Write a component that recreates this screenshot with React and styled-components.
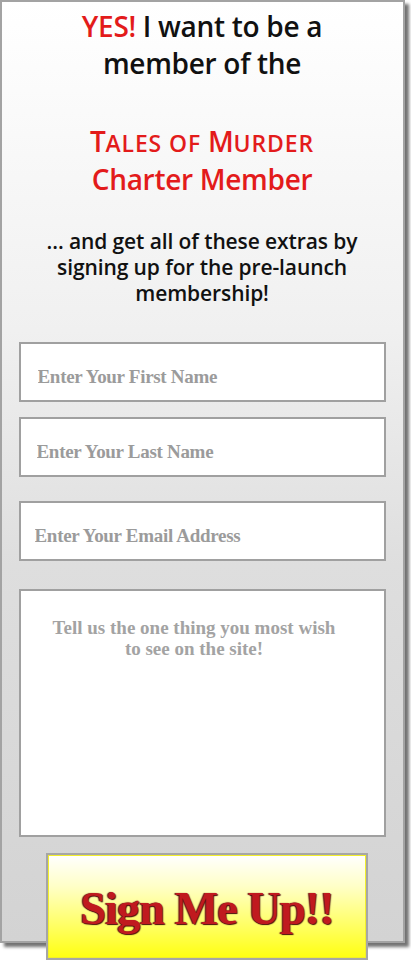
import React from "react";
import styled, { createGlobalStyle } from "styled-components";

const GlobalStyle = createGlobalStyle`
  html, body {
    margin: 0;
    padding: 0;
    background: #ffffff;
  }
  body {
    width: 411px;
    height: 960px;
    overflow: hidden;
  }
`;

const Page = styled.div`
  display: flex;
  flex-direction: column;
  align-items: flex-start;
`;

const Panel = styled.form`
  box-sizing: border-box;
  width: 405px;
  height: 943px;
  border: 2px solid #a3a3a3;
  background: linear-gradient(to bottom, #ffffff 0%, #f0f0f0 35%, #dedede 60%, #d3d3d3 100%);
  box-shadow: 4px 4px 3px rgba(0, 0, 0, 0.55);
  display: flex;
  flex-direction: column;
  align-items: center;
  padding: 6px 17px 0 16px;
  & > * {
    flex-shrink: 0;
  }
`;

const Headline = styled.h1`
  margin: 0;
  font-family: "Open Sans", "Liberation Sans", sans-serif;
  font-weight: 600;
  font-size: 28px;
  line-height: 37px;
  color: #111;
  text-align: center;
  letter-spacing: -0.3px;
`;

const Red = styled.span`
  color: #e31b1b;
`;

const Club = styled.h2`
  margin: 41px 0 0;
  font-family: "Open Sans", "Liberation Sans", sans-serif;
  font-weight: 600;
  font-size: 28px;
  line-height: 36px;
  color: #e31b1b;
  text-align: center;
  letter-spacing: -0.3px;
`;

const SmallCap = styled.span`
  text-transform: uppercase;
  font-size: 0.82em;
  letter-spacing: 0.9px;
`;

const Extras = styled.p`
  margin: 31px 0 0;
  font-family: "Open Sans", "Liberation Sans", sans-serif;
  font-weight: 600;
  font-size: 21px;
  line-height: 26px;
  color: #111;
  text-align: center;
  letter-spacing: -0.1px;
`;

const Field = styled.input`
  box-sizing: border-box;
  width: 367px;
  height: 60px;
  margin-top: ${(p) => p.$gap}px;
  border: 2px solid #a0a0a0;
  background: #ffffff;
  padding: 9px 0 0 ${(p) => p.$indent}px;
  font-family: "Liberation Serif", "DejaVu Serif", serif;
  font-weight: bold;
  font-size: 19px;
  letter-spacing: -0.3px;
  color: #999;
  outline: none;
  &::placeholder {
    color: #9b9b9b;
    opacity: 1;
  }
`;

const Wish = styled.textarea`
  box-sizing: border-box;
  width: 367px;
  height: 248px;
  margin-top: 28px;
  border: 2px solid #a0a0a0;
  background: #ffffff;
  padding: 26px 44px 0 28px;
  resize: none;
  font-family: "Liberation Serif", "DejaVu Serif", serif;
  font-weight: bold;
  font-size: 19px;
  line-height: 21px;
  letter-spacing: 0;
  text-align: center;
  outline: none;
  &::placeholder {
    color: #a3a3a3;
    opacity: 1;
  }
`;

const SignUp = styled.button`
  box-sizing: border-box;
  width: 322px;
  height: 107px;
  margin-top: 16px;
  margin-left: 28px;
  align-self: flex-start;
  border: 2px solid #a6a6a6;
  box-shadow: inset 0 0 0 1px #f2ee2a;
  background: linear-gradient(to bottom, #ffffff 0%, #ffffc8 30%, #ffff60 70%, #ffff10 100%);
  display: flex;
  align-items: center;
  justify-content: center;
  padding: 4px 0 0;
  cursor: pointer;
  font-family: "Liberation Serif", "DejaVu Serif", serif;
  font-weight: bold;
  font-size: 46px;
  letter-spacing: -0.8px;
  color: #c01a1f;
  text-shadow: 1px 1px 1px #4a0c0c, -1px 0 1px #6a1414;
`;

const App = () => {
  return (
    <Page>
      <GlobalStyle />
      <Panel onSubmit={(e) => e.preventDefault()}>
        <Headline>
          <Red>YES!</Red> I want to be a
          <br />
          member of the
        </Headline>
        <Club>
          T<SmallCap>ales of</SmallCap> M<SmallCap>urder</SmallCap>
          <br />
          Charter Member
        </Club>
        <Extras>
          ... and get all of these extras by
          <br />
          signing up for the pre-launch
          <br />
          membership!
        </Extras>
        <Field $gap={36} $indent={17} placeholder="Enter Your First Name" />
        <Field $gap={15} $indent={16} placeholder="Enter Your Last Name" />
        <Field $gap={24} $indent={14} placeholder="Enter Your Email Address" />
        <Wish placeholder="Tell us the one thing you most wish to see on the site!" />
        <SignUp type="submit">Sign Me Up!!</SignUp>
      </Panel>
    </Page>
  );
};

export default App;
